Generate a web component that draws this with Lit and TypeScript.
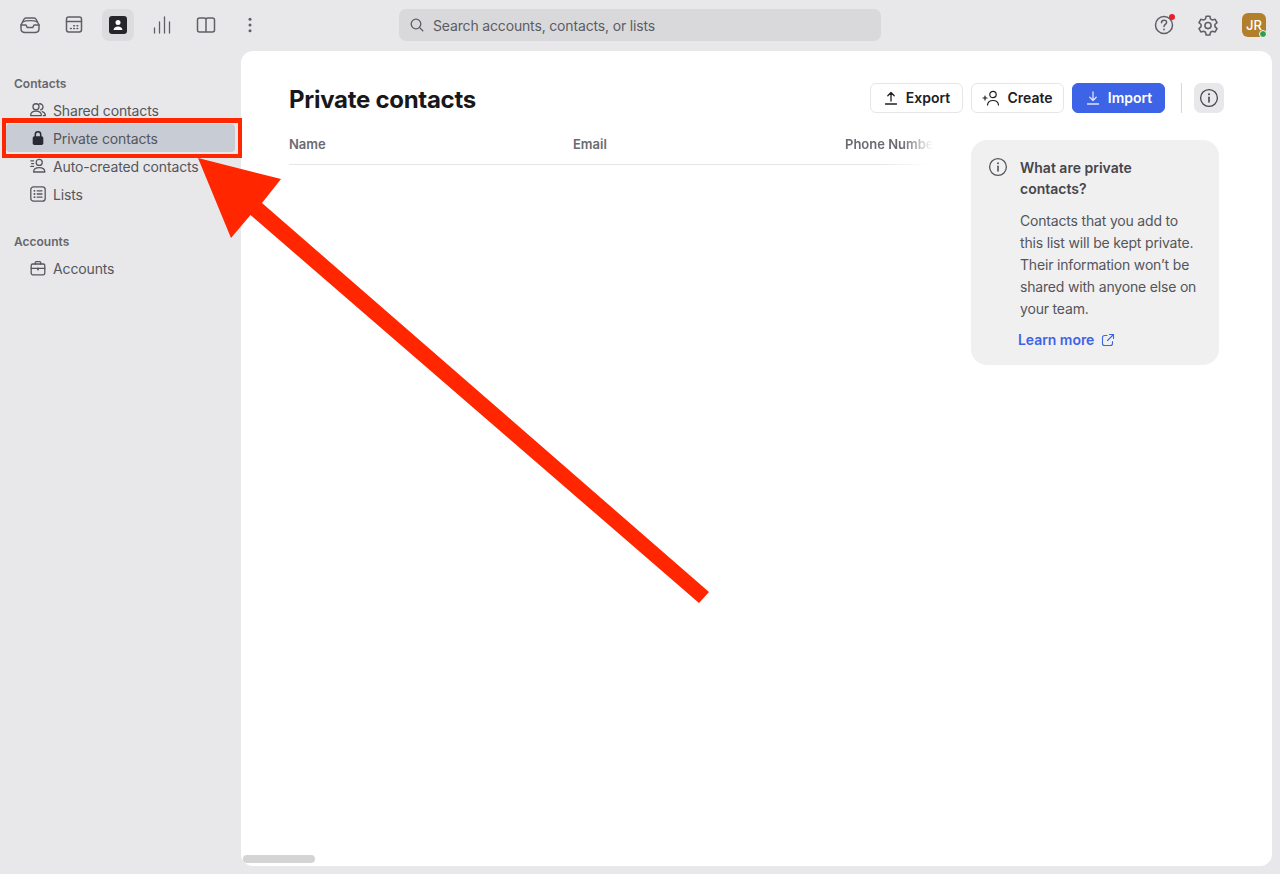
import { LitElement, html, css, svg } from "lit";
import { customElement } from "lit/decorators.js";

const ic = (body: unknown, size = 20, sw = 1.5) => html`<svg class="ic" width=${size} height=${size} viewBox="0 0 20 20" fill="none" stroke="currentColor" stroke-width=${sw} stroke-linecap="round" stroke-linejoin="round">${body}</svg>`;

const infoIcon = () => ic(svg`<circle cx="10" cy="10" r="8.400"/><path d="M10 9.200v4.800" stroke-width="1.600"/><circle cx="10" cy="6.300" r="1" fill="currentColor" stroke="none"/>`, 20, 1.3);

@customElement("app-root")
export class AppRoot extends LitElement {
  static styles = css`
    :host { display: block; position: relative; width: 1280px; height: 874px; overflow: hidden; background: #e8e8ea; font-family: Inter, "Liberation Sans", sans-serif; color: #55565c; }
    .ic { display: block; flex: none; }
    .top { height: 51px; display: flex; align-items: center; box-sizing: border-box; padding: 0 0 1px 14px; }
    .tools { display: flex; gap: 12px; width: 385px; }
    .tool { width: 32px; height: 32px; border-radius: 7px; display: flex; align-items: center; justify-content: center; color: #5f6067; }
    .tool.on { background: #dcdcde; color: #25252b; }
    .search { width: 482px; height: 32px; border-radius: 7px; background: #d9d9db; display: flex; align-items: center; gap: 8px; padding-left: 10px; box-sizing: border-box; font-size: 14px; letter-spacing: -0.16px; color: #5c5d63; }
    .right { margin-left: auto; display: flex; align-items: center; gap: 20px; padding-right: 14px; color: #5f6067; }
    .r-ic { position: relative; width: 24px; height: 24px; display: flex; align-items: center; justify-content: center; }
    .dot { position: absolute; right: 1px; top: 1px; width: 6px; height: 6px; border-radius: 50%; background: #e8202a; }
    .avatar { width: 24px; height: 24px; border-radius: 6px; background: #b37f2b; color: #fff; font-size: 13px; font-weight: 500; display: flex; align-items: center; justify-content: center; position: relative; margin-left: 2px; }
    .presence { position: absolute; right: -1px; bottom: -1px; width: 6px; height: 6px; border-radius: 50%; background: #2f9e4f; border: 1.5px solid #fff; }
    .body { display: flex; height: 815px; padding-right: 8px; }
    .side { width: 241px; flex: none; box-sizing: border-box; padding: 24px 6px 0 6px; }
    .sec { font-size: 12px; font-weight: 600; line-height: 18px; color: #66676d; padding-left: 8px; margin-bottom: 3px; }
    .sec.second { margin-top: 25px; margin-bottom: 3px; }
    .row { height: 28px; border-radius: 4px; display: flex; align-items: center; gap: 7px; padding-left: 24px; font-size: 14px; letter-spacing: -0.14px; color: #55565c; white-space: nowrap; }
    .row.on { background: #c8ccd5; }
    .main { flex: 1; background: #fff; border-radius: 12px; padding: 32px 48px 0; box-sizing: border-box; position: relative; }
    .head { display: flex; align-items: center; height: 30px; }
    h1 { margin: 3px 0 0; font-size: 24px; line-height: 30px; font-weight: 700; color: #18181b; letter-spacing: -0.28px; }
    .actions { margin-left: auto; display: flex; align-items: center; gap: 8px; }
    .btn { width: 93px; height: 30px; box-sizing: border-box; border-radius: 6px; border: 1px solid #e6e6e8; background: #fff; color: #202024; font-size: 14px; font-weight: 600; padding-bottom: 1px; display: flex; align-items: center; justify-content: center; gap: 7px; }
    .btn.pri { background: #3d63e6; border-color: #3d63e6; color: #fff; }
    .sep { width: 1px; height: 30px; background: #d5d5d8; margin: 0 4px 0 8px; }
    .info { width: 30px; height: 30px; border-radius: 7px; background: #e8e8ea; color: #45464c; display: flex; align-items: center; justify-content: center; }
    .content { display: flex; padding-top: 16px; }
    .table { width: 644px; flex: none; height: 51px; overflow: hidden; }
    .cols { height: 35px; box-sizing: border-box; padding-bottom: 5px; display: grid; grid-template-columns: 284px 272px 1fr; align-items: center; font-size: 13px; font-weight: 600; color: #6a6b71; white-space: nowrap; }
    .cols span:last-child { width: 88px; overflow: hidden; -webkit-mask-image: linear-gradient(90deg, #000 65%, transparent); mask-image: linear-gradient(90deg, #000 65%, transparent); }
    .line { height: 1px; width: 638px; background: linear-gradient(90deg, #e6e6e8 93%, transparent); }
    .card { margin-left: 38px; margin-top: 11px; width: 248px; height: 225px; box-sizing: border-box; background: #f0f0f1; border-radius: 16px; padding: 17px 20px 0 17px; display: grid; grid-template-columns: 20px 1fr; column-gap: 12px; align-content: start; }
    .card .t { font-size: 14px; font-weight: 600; line-height: 21px; color: #45464c; }
    .card p { grid-column: 2; margin: 11px 0 0; font-size: 14px; line-height: 22px; letter-spacing: -0.18px; color: #54555b; width: 180px; white-space: nowrap; }
    .learn { grid-column: 1 / 3; margin: 10px 0 0 30px; display: flex; align-items: center; gap: 7px; color: #3d63e6; font-size: 14px; font-weight: 600; line-height: 20px; letter-spacing: -0.05px; }
    .thumb { position: absolute; left: 2px; bottom: 3px; width: 72px; height: 8px; border-radius: 4px; background: #d4d4d4; }
    .mark { position: absolute; left: 0; top: 0; pointer-events: none; }
  `;

  render() {
    return html`
      <div class="top">
        <div class="tools">
          <div class="tool">${ic(svg`<path d="M1 10 3.800 4.500C4.300 3.500 5 3 6 3h8c1 0 1.700.5 2.200 1.500L19 10v3.500c0 2.400-1.600 4-4 4H5c-2.400 0-4-1.600-4-4z"/><path d="M1 10h5l1.300 2.600h5.400L14 10h5"/><path d="M2.800 7c3-1.800 11.400-1.800 14.400 0" stroke-width="1.200"/>`)}</div>
          <div class="tool">${ic(svg`<rect x="2.500" y="2" width="15" height="15" rx="2.200"/><path d="M2.500 6.500h15"/><path d="M6.500 13.500h.8M9.700 13.500h.8M13 13.500h.8M9.700 10.700h.8M13 10.700h.8" stroke-width="1.500"/>`)}</div>
          <div class="tool on">
            <svg class="ic" width="18" height="18" viewBox="0 0 18 18"><rect width="18" height="18" rx="3" fill="#25252b"/><circle cx="9" cy="6.600" r="2.500" fill="#fff"/><path d="M4.600 14c0-2.400 2-3.600 4.400-3.600s4.400 1.200 4.400 3.600z" fill="#fff"/></svg>
          </div>
          <div class="tool">${ic(svg`<path d="M2.500 13v5M7.500 7v11M12.500 2v16M17.500 7v11"/>`, 20, 1.300)}</div>
          <div class="tool">${ic(svg`<path d="M1.500 5c0-1.200.800-2 2-2H8c.9 0 1.600.3 2 1 .4-.7 1.100-1 2-1h4.500c1.200 0 2 .8 2 2v10c0 1.200-.8 2-2 2h-13c-1.200 0-2-.8-2-2zM10 4v13"/>`)}</div>
          <div class="tool"><svg class="ic" width="20" height="20" viewBox="0 0 20 20" fill="currentColor"><circle cx="10" cy="4.200" r="1.500"/><circle cx="10" cy="10" r="1.500"/><circle cx="10" cy="15.800" r="1.500"/></svg></div>
        </div>
        <div class="search">
          <svg class="ic" width="16" height="16" viewBox="0 0 16 16" fill="none" stroke="currentColor" stroke-width="1.300" stroke-linecap="round"><circle cx="7" cy="7" r="4.800"/><path d="m10.600 10.600 3.200 3.200"/></svg>
          Search accounts, contacts, or lists
        </div>
        <div class="right">
          <div class="r-ic">${ic(svg`<circle cx="10" cy="10" r="8.500"/><path d="M7.500 7.800c0-1.500 1.100-2.500 2.600-2.500s2.500 1 2.500 2.200c0 1.800-2.600 2-2.600 4"/><circle cx="10" cy="14.500" r=".9" fill="currentColor" stroke="none"/>`)}<span class="dot"></span></div>
          <div class="r-ic">${ic(svg`<path d="M8.300 2h3.400l.6 2.500 1.700 1 2.500-.7 1.700 3-1.900 1.800v1.900l1.900 1.800-1.700 3-2.500-.7-1.700 1-.6 2.500H8.300l-.6-2.500-1.700-1-2.500.7-1.700-3 1.900-1.800V9.600L1.800 7.800l1.700-3 2.500.7 1.700-1z" stroke-width="1.400"/><circle cx="10" cy="10.500" r="2.800" stroke-width="1.400"/>`, 22)}</div>
          <div class="avatar">JR<span class="presence"></span></div>
        </div>
      </div>
      <div class="body">
        <nav class="side">
          <div class="sec">Contacts</div>
          <div class="row">${ic(svg`<circle cx="7.500" cy="6" r="3.800"/><path d="M.8 17c0-3.600 2.800-5.500 6.700-5.500s6.700 1.900 6.700 5.500z"/><path d="M11.500 2.300c2.500-.6 4.800 1.300 4.800 3.700s-1.500 3.400-3 3.700M15.300 11.900c2.300.6 3.900 2.200 3.900 5.100h-2.600"/>`, 16, 1.600)}<span>Shared contacts</span></div>
          <div class="row on"><svg class="ic" width="16" height="16" viewBox="0 0 16 16"><path d="M5.300 7V4.500a2.700 2.700 0 0 1 5.400 0V7" fill="none" stroke="#2a2a32" stroke-width="1.500"/><rect x="2.700" y="6.300" width="10.600" height="8.700" rx="1.800" fill="#2a2a32"/></svg><span>Private contacts</span></div>
          <div class="row">${ic(svg`<circle cx="11.500" cy="5.500" r="3.800"/><path d="M4.500 17.500c0-3.500 3-5.500 7-5.500s7 2 7 5.500z"/><path d="M1 3.500h3.500M2 7h2.500M1 10.500h3.500"/>`, 16, 1.600)}<span>Auto-created contacts</span></div>
          <div class="row">${ic(svg`<rect x="1" y="1" width="18" height="18" rx="3.500"/><path d="M9 6h6M9 10h6M9 14h6"/><path d="M5.500 6h.2M5.500 10h.2M5.500 14h.2" stroke-width="2.200"/>`, 16, 1.600)}<span>Lists</span></div>
          <div class="sec second">Accounts</div>
          <div class="row">${ic(svg`<rect x="1.500" y="5" width="17" height="13.500" rx="1.800"/><path d="M6.500 5V3.500C6.500 2.500 7.200 2 8 2h4c.8 0 1.500.5 1.500 1.500V5M1.500 10.500h17"/><path d="M10 10.500v1.400" stroke-width="2.200"/>`, 16, 1.600)}<span>Accounts</span></div>
        </nav>
        <main class="main">
          <div class="head">
            <h1>Private contacts</h1>
            <div class="actions">
              <div class="btn"><svg class="ic" width="16" height="16" viewBox="0 0 16 16" fill="none" stroke="currentColor" stroke-width="1.300" stroke-linecap="round" stroke-linejoin="round"><path d="M8 11V2.500M4.800 5.700 8 2.500l3.200 3.200M2.500 14h11"/></svg>Export</div>
              <div class="btn"><svg class="ic" width="18" height="16" viewBox="0 0 18 16" fill="none" stroke="currentColor" stroke-width="1.200" stroke-linecap="round" stroke-linejoin="round"><circle cx="11" cy="4.500" r="3.200"/><path d="M5.500 15c.3-3 2.500-4.500 5.500-4.500s5.200 1.500 5.500 4.500M1 8h4M3 6v4"/></svg>Create</div>
              <div class="btn pri"><svg class="ic" width="16" height="16" viewBox="0 0 16 16" fill="none" stroke="#dfe6ff" stroke-width="1.300" stroke-linecap="round" stroke-linejoin="round"><path d="M8 2v8.500M4.800 7.300 8 10.500l3.200-3.200M2.500 14h11"/></svg>Import</div>
              <div class="sep"></div>
              <div class="info">${infoIcon()}</div>
            </div>
          </div>
          <div class="content">
            <div class="table">
              <div class="cols"><span>Name</span><span>Email</span><span>Phone Number</span></div>
              <div class="line"></div>
            </div>
            <aside class="card">
              ${infoIcon()}
              <div class="t">What are private contacts?</div>
              <p>Contacts that you add to<br />this list will be kept private.<br />Their information won’t be<br />shared with anyone else on<br />your team.</p>
              <div class="learn">Learn more <svg class="ic" width="14" height="14" viewBox="0 0 14 14" fill="none" stroke="currentColor" stroke-width="1.100" stroke-linecap="round" stroke-linejoin="round"><path d="M6 2.500H3.500a2 2 0 0 0-2 2v6a2 2 0 0 0 2 2h6a2 2 0 0 0 2-2V8.500M8.500 1.500h4v4M12.500 1.500 6.500 7.500"/></svg></div>
            </aside>
          </div>
          <div class="thumb"></div>
        </main>
      </div>
      <svg class="mark" width="1280" height="874" viewBox="0 0 1280 874">
        <path fill-rule="evenodd" d="M2 118H242V158H2ZM6 123V154H238V123Z" fill="#ff2600"/>
        <polygon points="198,158 281,179 262,203 709,592 699,603 250.500,215 231,238" fill="#ff2600"/>
      </svg>
    `;
  }
}
